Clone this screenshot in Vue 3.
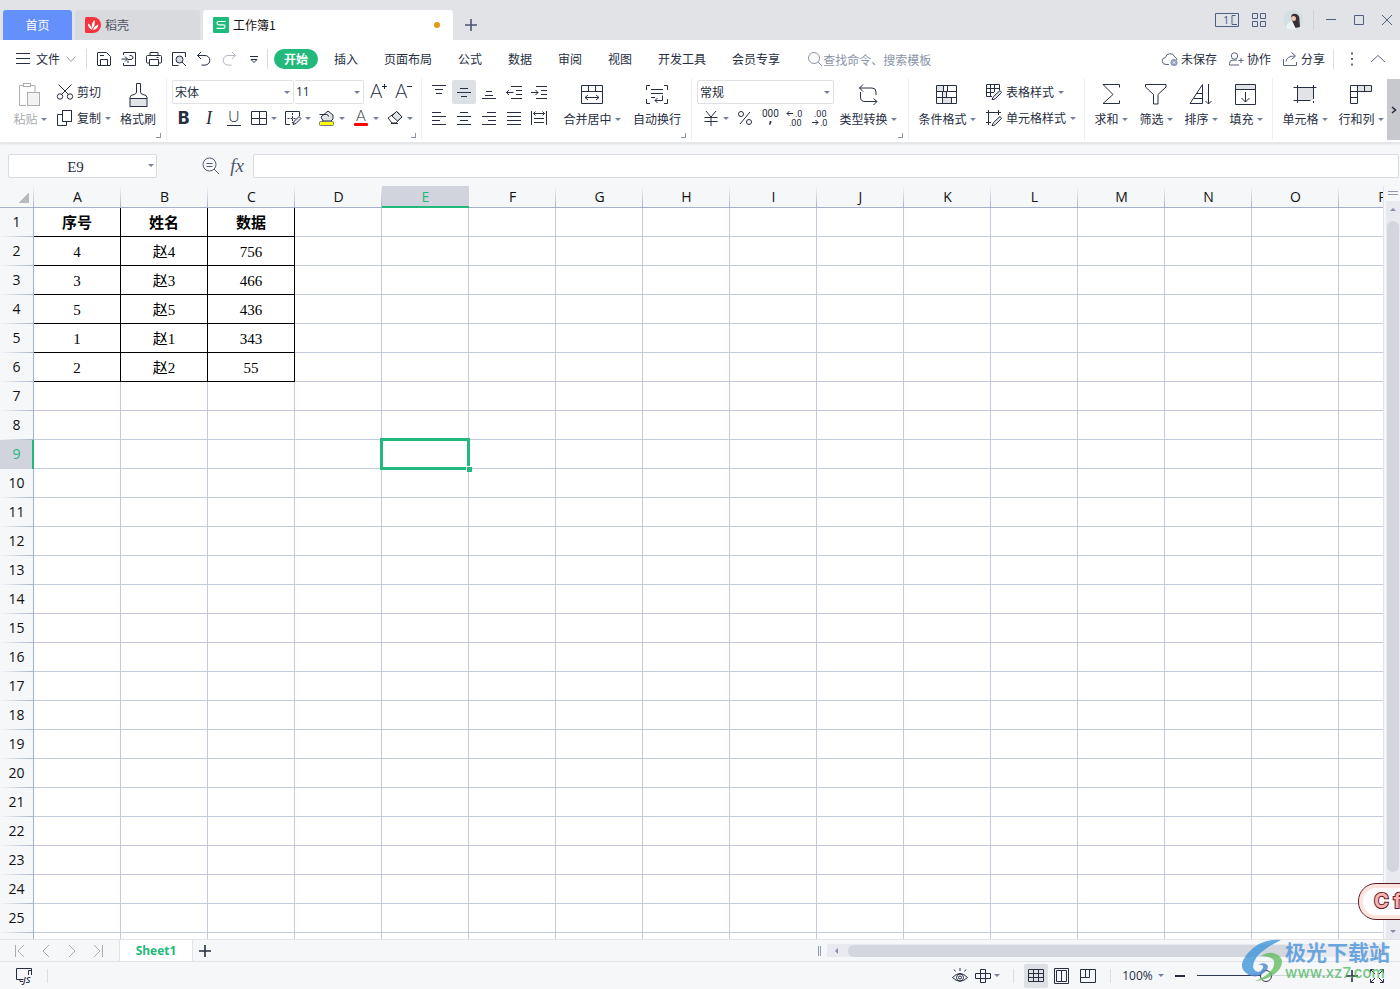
<script setup>
import { h, ref } from 'vue'

const text = (x, y, size, value, extra = '') =>
  `<text x="${x}" y="${y}" font-size="${size}" fill="currentColor" stroke="none" ${extra}>${value}</text>`

const icons = {
  menu: [16, 16, '<path d="M1 2.500h14M1 7.500h14M1 12.500h14"/>'],
  chevronDown: [12, 16, '<path d="M1.500 5.500l4.500 5 4.500-5" stroke="#9a9fab"/>'],
  chevronUp: [16, 16, '<path d="M1 11l7-6.500 7 6.500"/>'],
  save: [16, 16, '<path d="M3 1.500h7.500l4 4V14q0 .5-.5.5H2q-.5 0-.5-.5V2q0-.5.500-.5zM4.500 14V8.500h7V14M4 4.500h4"/>'],
  export: [16, 16, '<path d="M2.500 4V1.500h12v13h-12V12M.500 8h6M4 5.500L6.500 8 4 10.500M7 12V9.500M8.500 4.500h1.500q2.500.500 2 2.500-.5 1.800-3 1.500H7"/>'],
  print: [16, 16, '<path d="M4 4V1.500h8V4M3.500 12H1.500q-1 0-1-1V5.500q0-1 1-1h13q1 0 1 1V11q0 1-1 1h-2M3.500 8.500h9v6h-9zM10.500 6.500h2"/>'],
  preview: [16, 16, '<path d="M14.500 6V1.500h-13v13h6"/><circle cx="8.500" cy="8.500" r="3.500" fill="#d8dade"/><path d="M11 11l4 4"/>'],
  undo: [16, 16, '<path d="M5 1L1.500 4.500 5 8M1.500 4.500H9a4.800 4.800 0 010 9.600H5.500"/>'],
  redo: [16, 16, '<g stroke="#b4b7bf"><path d="M11 1l3.500 3.500L11 8M14.500 4.500H7a4.800 4.800 0 000 9.600h3.500"/></g>'],
  more: [10, 16, '<path d="M1 5.500h8M2 8.500l3 3 3-3z"/>'],
  search: [16, 16, '<circle cx="7" cy="7" r="5.500" stroke="#8a95aa"/><path d="M11 11l4 4" stroke="#8a95aa"/>'],
  cloud: [16, 16, '<path d="M7 13.500H4a3.500 3.500 0 01-.5-7 4.800 4.800 0 019.200-.7A3.900 3.900 0 0115 9"/><circle cx="12" cy="11.500" r="3.500" fill="#8d9bb8" stroke="none"/><path d="M10.800 10.300l2.400 2.400M13.200 10.300l-2.400 2.400" stroke="#fff"/>'],
  people: [16, 16, '<circle cx="6.500" cy="5" r="3.200"/><path d="M9 9.200H5A3.300 3.300 0 001.500 12.500v1.500h9.500M10.500 9.500h5M13 7v5"/>'],
  share: [16, 16, '<path d="M1.500 8v6.500h13V11M4 10.500q.5-5.500 9-5.500M9.500 1.500L13.500 5l-4 3.500"/>'],
  dots: [4, 16, '<path d="M1 2.500h2M1 8h2M1 13.500h2" stroke-width="2"/>'],
  paste: [24, 24, '<g stroke="#aeaeb2"><path d="M8 22.500H1.500V2.500h4M12 2.500h5V9"/><rect x="5.500" y=".5" width="7" height="3"/><rect x="9.500" y="9.500" width="12" height="13" fill="#f3f3f4"/></g>'],
  cut: [18, 18, '<circle cx="4" cy="13.500" r="2.700"/><circle cx="14" cy="13.500" r="2.700"/><path d="M2.500 1.500l10 10M15.500 1.500l-10 10"/>'],
  copy: [18, 18, '<rect x="6.500" y="1.500" width="9" height="11"/><path d="M6 5.500H1.500v11H10.500V13"/>'],
  brush: [24, 24, '<path d="M10.500 9V.500h4V9q0 2 2.500 2.500 4 .5 4 3v1h-17v-1q0-2.500 4-3Q10.500 11 10.500 9z"/><rect x="4" y="15.500" width="17" height="8" fill="#e2e3e7"/>'],
  bigger: [18, 18, text(0, 15, 19, 'A', 'font-family="Lato" font-weight="300"') + '<path d="M12 3.500h5M14.500 1v5"/>'],
  smaller: [18, 18, text(0, 15, 19, 'A', 'font-family="Lato" font-weight="300"') + '<path d="M12 3.500h5"/>'],
  bold: [18, 18, text(3, 15, 17, 'B', 'font-family="Inter" font-weight="800"')],
  italic: [18, 18, text(6, 15, 18, 'I', 'font-family="Liberation Serif" font-style="italic"')],
  underline: [18, 18, text(3, 13, 16, 'U', 'font-family="Lato" font-weight="300"') + '<path d="M2 16.500h14"/>'],
  borders: [18, 18, '<path d="M1.500 2.500h15v13h-15zM9.500 2.500v13M1.500 9.500h15"/>'],
  pattern: [18, 18, '<path d="M6 15.500H1.500V2.500h14V7"/><path d="M8.500 4v10M3.500 9.500h8" stroke-dasharray="2 1"/><path d="M9 15.500l1-3 5-5 2 2-5 5z" fill="#e2e3e7"/>'],
  fill: [18, 18, '<path d="M3 8l7-6 5 4v4l-2 2H5zM1.500 5.500h7q2 0 2 2" fill="#e2e3e7"/><rect x="1.500" y="12.500" width="14" height="4" rx="1" fill="#ff0" stroke="#77777b"/>'],
  fontColor: [18, 18, text(4, 12, 15, 'A', 'font-family="Lato" font-weight="300"') + '<rect x="2" y="14" width="14" height="3" rx="1" fill="red" stroke="none"/>'],
  eraser: [18, 18, '<path d="M2 9l4 5h4l6-6-5-5.500z"/><path d="M6 7l4.500-4.500L16 8l-4.500 4z" fill="#e2e3e7"/><path d="M5 14.500h7"/>'],
  top: [18, 18, '<path d="M2 2.500h14M5 6.500h8M6 10.500h6"/>'],
  middle: [18, 18, '<path d="M5 5.500h8M2 9.500h14M6 13.500h6"/>'],
  bottom: [18, 18, '<path d="M6 8.500h6M5 12.500h8M2 15.500h14"/>'],
  outdent: [18, 18, '<path d="M6 3.500h11M11 7.500h6M11 11.500h6M6 15.500h11M1.500 9.500h7M4 7L1.500 9.500 4 12"/>'],
  indent: [18, 18, '<path d="M6 3.500h11M11 7.500h6M11 11.500h6M6 15.500h11M1 9.500h7M5.500 7L8 9.500 5.500 12"/>'],
  left: [18, 18, '<path d="M2 3.500h9M2 7.500h14M2 11.500h8M2 15.500h14"/>'],
  center: [18, 18, '<path d="M5 3.500h8M2 7.500h14M5 11.500h8M2 15.500h14"/>'],
  right: [18, 18, '<path d="M7 3.500h9M2 7.500h14M8 11.500h8M2 15.500h14"/>'],
  justify: [18, 18, '<path d="M2 3.500h14M2 7.500h14M2 11.500h14M2 15.500h14"/>'],
  distribute: [18, 18, '<path d="M1.500 2v14M16.500 2v14M4 9.500h10M4 13.500h10M3.500 4.500h11M5.500 2.500l-2 2 2 2M12.500 2.500l2 2-2 2"/>'],
  merge: [24, 24, '<path d="M1.500 2.500h21v18h-21zM1.500 8.500h21M8.500 2.500v6M15.500 2.500v6M5 14.500h14M8 12l-3 2.500L8 17M16 12l3 2.500-3 2.500"/>'],
  wrap: [24, 24, '<path d="M5 2.500H1.500V7M19 2.500h3.500V7M5 20.500H1.500V16M19 20.500h3.500V16M6 6.500h12M6 10.500h12M6 14.500h4M17.500 12.500v5H10M12.500 15L10 17.500l2.500 2.500"/>'],
  currency: [18, 18, '<path d="M4 2l5 6 5-6M9 8v9M2.500 8.500h13M2.500 12.500h13"/>'],
  percent: [18, 18, '<circle cx="5" cy="5" r="2.500"/><circle cx="13" cy="13" r="2.500"/><path d="M14 3L4 15"/>'],
  comma: [20, 18, text(2, 8, 10, '000', 'font-family="Roboto"') + '<path d="M10.500 12v1.500l-1 2" stroke-width="1.600"/>'],
  lessDecimal: [20, 18, text(10, 8, 9, '.0', 'font-family="Roboto"') + text(4, 17, 9, '.00', 'font-family="Roboto"') + '<path d="M2 4.500h6M4.500 2L2 4.500 4.500 7"/>'],
  moreDecimal: [20, 18, text(4, 8, 9, '.00', 'font-family="Roboto"') + text(10, 17, 9, '.0', 'font-family="Roboto"') + '<path d="M2 13.500h6M5.500 11L8 13.500 5.500 16"/>'],
  convert: [24, 24, '<path d="M7 1.500L3.500 5 7 8.500M3.500 5H16q4 0 4 4v3M4.500 9v5q0 4.500 4.500 4.500h12M17.500 15.500l3.500 3-3.500 3.500"/>'],
  condition: [24, 24, '<path d="M2 3h7v5H2zM7 9h4v6H7zM8 15h8v5h-8z" fill="#e2e3e7" stroke="none"/><path d="M1.500 2.500h20v18h-20zM1.500 8.500h20M1.500 14.500h20M8.500 2.500v6M14.500 2.500v0M7.500 8.500v12M11.500 8.500v6M16.500 14.500v6M12.500 2.500v6"/>'],
  tableStyle: [18, 18, '<path d="M7 13.500H1.500V1.500h13V7M1.500 5.500h13M1.500 9.500H9M5.500 1.500v12M9.500 1.500V9"/><path d="M7 16.500l1.500-3 6.500-6 1.500 2-6 6q-1.500 1.500-3.500 1z" fill="#e2e3e7"/>'],
  cellStyle: [18, 18, '<path d="M3.500 1v15M1 3.500h15M1 13.500h5M13.500 1v5"/><path d="M7 16.500l1.500-3 6.500-6 1.500 2-6 6q-1.500 1.500-3.500 1z" fill="#e2e3e7"/>'],
  sum: [24, 24, '<path d="M20.500 4.500v-3H4l10 10L4 20.500h16.500v-3"/>'],
  filter: [24, 24, '<path d="M1.500 1.500h20.500v2.500l-8 7.500v9.500h-4.500v-9.500L1.500 4z"/>'],
  sort: [24, 24, '<path d="M1 20.500L13.500 1.500v19zM8 10.500h5.500M5 15.500h8.500M19.500 1v20M16.500 18l3 3 3-3"/>'],
  fillDown: [24, 24, '<path d="M2 2h20v4H2z" fill="#e2e3e7" stroke="none"/><path d="M1.500 1.500h20v20h-20zM1.500 6.500h20M11.500 9v10M7.500 15l4 4 4-4"/>'],
  cell: [24, 24, '<path d="M4 5h16v12H4z" fill="#e2e3e7" stroke="none"/><path d="M4.500 2v18M20.500 2v14M.500 4.500h23M.500 17.500h17M20.500 18v2"/>'],
  rowcol: [24, 24, '<path d="M9 3h6v5H9zM16 3h6v5h-6z" fill="#e2e3e7" stroke="none"/><path d="M1.500 2.500h21v6H8.500v12h-7zM8.500 2.500v6h-7M15.500 2.500v6M1.500 14.500h7"/>'],
  chevronRight: [8, 12, '<path d="M2 3l3.500 3L2 9" stroke-width="1.600"/>'],
  zoomOut: [18, 18, '<circle cx="7.500" cy="7.500" r="6.500"/><path d="M12 12l5 5M4.500 6.500h6M4.500 9.500h6"/>'],
  pages: [24, 16, '<path d="M.500 1.500h23v13H.500zM20.500 3.500h-3.500v9h3.500M20 12.500h2"/>' + text(8, 12, 11, '1', 'font-family="Open Sans"')],
  apps: [16, 16, '<path d="M1.500 1.500h5v5h-5zM9.500 1.500h5v5h-5zM1.500 9.500h5v5h-5zM9.500 9.500h5v5h-5z"/>'],
  minimize: [12, 12, '<path d="M1 5.500h10"/>'],
  maximize: [12, 12, '<path d="M1.500 1.500h9v9h-9z"/>'],
  close: [12, 12, '<path d="M1 1l10 10M11 1L1 11"/>'],
  plus: [14, 14, '<path d="M7 1v12M1 7h12" stroke-width="1.600"/>'],
  minus: [12, 12, '<path d="M1 6h10" stroke-width="2"/>'],
  first: [12, 14, '<path d="M1.500 1v12M10 1L4 7l6 6"/>'],
  prev: [12, 14, '<path d="M9 1L3 7l6 6"/>'],
  next: [12, 14, '<path d="M3 1l6 6-6 6"/>'],
  last: [12, 14, '<path d="M10.500 1v12M2 1l6 6-6 6"/>'],
  macro: [18, 18, '<path d="M8.500 12.500H1.500V1.500h15v5M13.500 8V3.500h3V8"/><path d="M5 12.500v2h3"/>' + text(8, 16, 9, 'JS', 'font-family="Open Sans" font-style="italic" font-weight="600"')],
  eye: [18, 18, '<path d="M1.500 10.500Q9 2.500 16.500 10.500 9 18 1.500 10.500z"/><circle cx="9" cy="10.500" r="3.500"/><circle cx="9" cy="10.500" r="1.500"/><path d="M9 1v3M3 2.500l1.500 2M15 2.500l-1.500 2"/>'],
  cross: [18, 18, '<path d="M6.500 2.500h5v13h-5zM1.500 6.500h15v5h-15z"/>'],
  normalView: [18, 18, '<path d="M1.500 2.500h15v12h-15zM1.500 6.500h15M1.500 10.500h15M6.500 2.500v12M11.500 2.500v12"/>'],
  pageView: [18, 18, '<path d="M1.500 1.500h14v15h-14zM3.500 3.500h10v11h-10zM8.500 3.500v11"/>'],
  breakView: [18, 18, '<path d="M1.500 2.500h15v13h-15zM1.500 10.500h9v-8M6.500 2.500v8"/>'],
  fullscreen: [16, 16, '<path d="M1.500 5V1.500H5M11 1.500h3.500V5M14.500 11v3.500H11M5 14.500H1.500V11M2 2l4 4M14 2l-4 4M14 14l-4-4M2 14l4-4"/>'],
  docer: [16, 16, '<path d="M0 1.500Q0 0 1.500 0H8a8 8 0 010 16H1.500Q0 16 0 14.500z" fill="#f5333f" stroke="none"/><path d="M7 13Q3 11 3 6.500 6.500 8 7 13zM7 12Q6 6 9.500 3 11 7.500 7 12zM8 13q.5-4 5.500-5.500Q12.500 12.500 8 13z" fill="#fff" stroke="none"/>'],
  sheets: [16, 16, '<rect width="16" height="16" rx="1" fill="#1fbb7d" stroke="none"/><path d="M12.500 4.500h-7Q4 4.500 4 6t1.500 1.800h5q1.500 0 1.500 1.700t-1.500 1.800h-7" stroke="#fff" stroke-width="1.200"/>'],
  avatar: [20, 20, '<circle cx="10" cy="10" r="10" fill="#d3dfe3" stroke="none"/><path d="M8 8q0-5 5-4 4 1 3.500 7L17 17l-5 1z" fill="#3b3038" stroke="none"/><circle cx="10.500" cy="8.500" r="2.500" fill="#e8c5b5" stroke="none"/><path d="M3 18q1-6 6-7l4 8q-5 2-10-1z" fill="#edf3f5" stroke="none"/>'],
  logo: [44, 44, '<g stroke="none"><path d="M40 1Q20-1 7 14-4 27 5 34q7 5 17-1-9 1-10-5 0-10 14-19Q32 5 40 1z" fill="#3f97dc"/><path d="M20 17q8-6 17-1 8 6 0 16-9 9-23 10 13-5 18-13 4-9-5-11-3-1-7-1z" fill="#67bd62"/><path d="M6 35q10 6 19-3 4-5 0-7-4-2-8 1 6-1 5 3-3 6-16 6z" fill="#4a86cf"/></g>'],
}

const Icon = (props) => {
  const [w, hgt, body] = icons[props.name]
  return h('svg', {
    class: 'icon', width: w, height: hgt, viewBox: `0 0 ${w} ${hgt}`,
    fill: 'none', stroke: 'currentColor', 'stroke-width': 1, 'aria-hidden': 'true', innerHTML: body,
  })
}
Icon.props = ['name']

const quick = [
  ['save', '保存'], ['export', '输出'], ['print', '打印'], ['preview', '打印预览'],
  ['undo', '撤销'], ['redo', '恢复'], ['more', '更多'],
]
const menus = ['开始', '插入', '页面布局', '公式', '数据', '审阅', '视图', '开发工具', '会员专享']
const formatting = [['bold', '加粗'], ['italic', '倾斜'], ['underline', '下划线']]
const painting = [['borders', '边框'], ['pattern', '绘图边框'], ['fill', '填充颜色'], ['fontColor', '字体颜色'], ['eraser', '清除']]
const alignTop = [['top', '顶端对齐'], ['middle', '垂直居中'], ['bottom', '底端对齐'], ['outdent', '减少缩进'], ['indent', '增加缩进']]
const alignBottom = [['left', '左对齐'], ['center', '水平居中'], ['right', '右对齐'], ['justify', '两端对齐'], ['distribute', '分散对齐']]
const numbers = [['percent', '百分比'], ['comma', '千位分隔'], ['lessDecimal', '增加小数位'], ['moreDecimal', '减少小数位']]
const editing = [['sum', '求和'], ['filter', '筛选'], ['sort', '排序'], ['fillDown', '填充']]
const sheetNav = [['first', '第一个'], ['prev', '上一个'], ['next', '下一个'], ['last', '最后一个']]

const columns = 'ABCDEFGHIJKLMNOP'.split('')
const data = [
  ['序号', '姓名', '数据'],
  ['4', '赵4', '756'],
  ['3', '赵3', '466'],
  ['5', '赵5', '436'],
  ['1', '赵1', '343'],
  ['2', '赵2', '55'],
]
const value = (r, c) => data[r - 1]?.[c] ?? ''
const filled = (r, c) => r <= data.length && c < 3
const zoom = ref(50)
</script>

<template>
  <div class="app">
    <header class="titlebar">
      <button class="tab home">首页</button>
      <button class="tab docer"><Icon name="docer" />稻壳</button>
      <button class="tab book"><Icon name="sheets" />工作簿1<span class="unsaved"></span></button>
      <button class="add-tab" aria-label="新建"><Icon name="plus" /></button>
      <div class="window-tools">
        <button aria-label="窗口"><Icon name="pages" /></button>
        <button aria-label="应用"><Icon name="apps" /></button>
        <button class="user" aria-label="账号"><Icon name="avatar" /></button>
        <span class="rule"></span>
        <button aria-label="最小化"><Icon name="minimize" /></button>
        <button aria-label="最大化"><Icon name="maximize" /></button>
        <button aria-label="关闭"><Icon name="close" /></button>
      </div>
    </header>

    <nav class="menubar">
      <button class="file"><Icon name="menu" />文件<Icon name="chevronDown" /></button>
      <span class="rule"></span>
      <div class="quick">
        <button v-for="[icon, label] in quick" :key="icon" :aria-label="label"><Icon :name="icon" /></button>
      </div>
      <span class="rule"></span>
      <div class="menus">
        <button v-for="(m, i) in menus" :key="m" :class="{ active: i === 0 }">{{ m }}</button>
      </div>
      <label class="search"><Icon name="search" /><input type="text" placeholder="查找命令、搜索模板" aria-label="查找命令" /></label>
      <div class="account">
        <button><Icon name="cloud" />未保存</button>
        <button><Icon name="people" />协作</button>
        <button><Icon name="share" />分享</button>
        <span class="rule"></span>
        <button class="kebab" aria-label="更多"><Icon name="dots" /></button>
        <button aria-label="收起"><Icon name="chevronUp" /></button>
      </div>
    </nav>

    <section class="ribbon">
      <div class="group clipboard">
        <button class="big paste"><Icon name="paste" /><span>粘贴<i class="caret"></i></span></button>
        <div class="stack">
          <button><Icon name="cut" />剪切</button>
          <button><Icon name="copy" />复制<i class="caret"></i></button>
        </div>
        <button class="big painter"><Icon name="brush" /><span>格式刷</span></button>
        <i class="launcher"></i>
      </div>
      <div class="group font">
        <div class="stack">
          <div class="line">
            <label class="pick family"><select aria-label="字体"><option>宋体</option></select><i class="caret"></i></label>
            <label class="pick size"><select aria-label="字号"><option>11</option></select><i class="caret"></i></label>
            <button class="tool grow" aria-label="增大字号"><Icon name="bigger" /></button>
            <button class="tool" aria-label="减小字号"><Icon name="smaller" /></button>
          </div>
          <div class="line">
            <button v-for="[icon, label] in formatting" :key="icon" class="tool" :aria-label="label"><Icon :name="icon" /></button>
            <button v-for="[icon, label] in painting" :key="icon" class="split" :aria-label="label"><Icon :name="icon" /><i class="caret"></i></button>
          </div>
        </div>
        <i class="launcher"></i>
      </div>
      <div class="group align">
        <div class="stack">
          <div class="line">
            <button v-for="[icon, label] in alignTop" :key="icon" class="tool" :class="{ on: icon === 'middle' }" :aria-label="label"><Icon :name="icon" /></button>
          </div>
          <div class="line">
            <button v-for="[icon, label] in alignBottom" :key="icon" class="tool" :aria-label="label"><Icon :name="icon" /></button>
          </div>
        </div>
        <button class="big merge"><Icon name="merge" /><span>合并居中<i class="caret"></i></span></button>
        <button class="big"><Icon name="wrap" /><span>自动换行</span></button>
        <i class="launcher"></i>
      </div>
      <div class="group number">
        <div class="stack">
          <div class="line">
            <label class="pick format"><select aria-label="数字格式"><option>常规</option></select><i class="caret"></i></label>
          </div>
          <div class="line">
            <button class="split" aria-label="货币"><Icon name="currency" /><i class="caret"></i></button>
            <button v-for="[icon, label] in numbers" :key="icon" class="tool" :aria-label="label"><Icon :name="icon" /></button>
          </div>
        </div>
        <button class="big"><Icon name="convert" /><span>类型转换<i class="caret"></i></span></button>
        <i class="launcher"></i>
      </div>
      <div class="group style">
        <button class="big"><Icon name="condition" /><span>条件格式<i class="caret"></i></span></button>
        <div class="stack">
          <button><Icon name="tableStyle" />表格样式<i class="caret"></i></button>
          <button><Icon name="cellStyle" />单元格样式<i class="caret"></i></button>
        </div>
      </div>
      <div class="group editing">
        <button v-for="[icon, label] in editing" :key="icon" class="big"><Icon :name="icon" /><span>{{ label }}<i class="caret"></i></span></button>
      </div>
      <div class="group cells">
        <button class="big"><Icon name="cell" /><span>单元格<i class="caret"></i></span></button>
        <button class="big"><Icon name="rowcol" /><span>行和列<i class="caret"></i></span></button>
      </div>
      <button class="scroll-more" aria-label="更多工具"><Icon name="chevronRight" /></button>
    </section>

    <section class="formula">
      <label class="name-box"><input type="text" value="E9" aria-label="名称框" /><i class="caret"></i></label>
      <button class="lens" aria-label="缩小"><Icon name="zoomOut" /></button>
      <button class="fx" aria-label="插入函数">fx</button>
      <input class="formula-input" type="text" aria-label="编辑栏" />
    </section>

    <main class="sheet">
      <div class="viewport">
        <table>
          <colgroup><col class="row-col" /><col v-for="c in columns" :key="c" class="data-col" /></colgroup>
          <thead>
            <tr>
              <th class="corner"></th>
              <th v-for="c in columns" :key="c" :class="{ current: c === 'E' }">{{ c }}</th>
            </tr>
          </thead>
          <tbody>
            <tr v-for="r in 26" :key="r">
              <th :class="{ current: r === 9 }">{{ r }}</th>
              <td v-for="(c, i) in columns" :key="c" :class="{ filled: filled(r, i), head: r === 1 }">
                {{ value(r, i) }}<div v-if="r === 9 && c === 'E'" class="selection"></div>
              </td>
            </tr>
          </tbody>
        </table>
      </div>
      <div class="vscroll">
        <div class="splitter"></div>
        <div class="track">
          <i class="arrow up"></i>
          <div class="thumb"></div>
          <i class="arrow down"></i>
        </div>
      </div>
      <div class="sticker">C f</div>
    </main>

    <section class="sheetbar">
      <div class="sheet-nav">
        <button v-for="[icon, label] in sheetNav" :key="icon" :aria-label="label"><Icon :name="icon" /></button>
      </div>
      <button class="sheet-tab">Sheet1</button>
      <button class="add-sheet" aria-label="新建工作表"><Icon name="plus" /></button>
      <div class="hsplit"></div>
      <div class="hscroll"><i class="arrow back"></i><div class="thumb"></div><i class="arrow forward"></i></div>
    </section>

    <footer class="status">
      <button class="macro" aria-label="宏"><Icon name="macro" /></button>
      <span class="rule"></span>
      <div class="status-right">
        <button aria-label="护眼模式"><Icon name="eye" /></button>
        <button class="reading" aria-label="阅读模式"><Icon name="cross" /><i class="caret"></i></button>
        <span class="rule"></span>
        <button class="view on" aria-label="普通视图"><Icon name="normalView" /></button>
        <button class="view" aria-label="页面布局视图"><Icon name="pageView" /></button>
        <button class="view" aria-label="分页预览"><Icon name="breakView" /></button>
        <span class="rule"></span>
        <button class="percent">100%<i class="caret"></i></button>
        <button aria-label="缩小显示"><Icon name="minus" /></button>
        <input v-model="zoom" type="range" min="0" max="100" aria-label="缩放比例" />
        <button aria-label="放大显示"><Icon name="plus" /></button>
        <button class="full" aria-label="全屏"><Icon name="fullscreen" /></button>
      </div>
      <div class="mark">
        <Icon name="logo" />
        <div><strong>极光下载站</strong><span>www.xz7.com</span></div>
      </div>
    </footer>
  </div>
</template>

<style>
body { margin: 0; }
</style>

<style scoped>
.app {
  --ink: #262e42;
  --green: #22b97c;
  --line: #e1e3e8;
  --latin: "Open Sans", "Noto Sans CJK SC", sans-serif;
  display: flex;
  flex-direction: column;
  height: 100vh;
  overflow: hidden;
  position: relative;
  background: #f6f7f9;
  color: var(--ink);
  font: 12px/18px "Noto Sans CJK SC", sans-serif;
}
button, input, select { font: inherit; color: inherit; border: 0; padding: 0; margin: 0; background: none; box-sizing: border-box; outline: 0; }
button { display: flex; align-items: center; justify-content: center; white-space: nowrap; flex: none; }
.icon { display: block; flex: none; overflow: visible; }
.rule { width: 1px; height: 20px; background: #dcdee3; flex: none; }
.caret { width: 0; height: 0; flex: none; border: 3px solid transparent; border-top-color: #76819a; border-bottom: 0; }

.titlebar { display: flex; align-items: flex-end; height: 40px; background: #e2e3e7; padding-left: 3px; flex: none; }
.tab { height: 30px; border-radius: 3px 3px 0 0; margin-right: 3px; gap: 4px; }
.home { width: 69px; background: #6490fb; color: #fff; }
.docer { width: 125px; background: #d9dade; color: #4d5260; justify-content: flex-start; padding-left: 10px; }
.book { width: 250px; background: #fff; justify-content: flex-start; padding: 0 13px 0 10px; color: #111; }
.unsaved { width: 6px; height: 6px; border-radius: 50%; background: #e49a14; margin-left: auto; }
.add-tab { width: 30px; height: 30px; color: #4a5673; }
.window-tools { display: flex; align-items: center; align-self: stretch; margin-left: auto; gap: 16px; padding-right: 7px; color: #4f5f80; }
.window-tools button { width: 12px; }
.window-tools button:first-child { width: 24px; margin-right: -4px; }
.window-tools button:nth-child(2) { width: 16px; }
.window-tools .user { width: 20px; margin-right: -6px; }
.window-tools .rule { margin-right: -5px; background: #cdd0d6; }

.menubar { display: flex; align-items: center; height: 38px; background: #fff; padding-left: 15px; flex: none; }
.file { gap: 5px; width: 62px; margin-right: 9px; }
.quick { display: flex; padding: 0 1px 0 4px; width: 175px; }
.quick button { width: 25px; height: 24px; }
.menus { display: flex; gap: 26px; margin-left: 16px; }
.menus .active { background: var(--green); color: #fff; font-weight: 700; border-radius: 10px; width: 44px; height: 20px; margin: 0 -10px; }
.search { display: flex; align-items: center; margin-left: 27px; }
.search input { width: 120px; height: 20px; }
.search input::placeholder { color: #8a93a8; opacity: 1; }
.account { display: flex; align-items: center; margin-left: auto; gap: 11px; padding-right: 14px; }
.account button { gap: 3px; }
.account .icon { color: #5d687f; }
.account .rule { margin-left: -3px; }
.account .kebab { width: 14px; }

.ribbon { display: flex; height: 64px; background: #fff; border-bottom: 1px solid #e6e7ea; box-shadow: 0 1px 2px #0000001a; flex: none; z-index: 1; }
.group { display: flex; position: relative; height: 62px; box-sizing: border-box; border-right: 1px solid #eceef1; padding-top: 1px; flex: none; }
.launcher { position: absolute; right: 5px; bottom: 2px; width: 4px; height: 4px; border: solid #8b94a8; border-width: 0 1px 1px 0; }
.big { flex-direction: column; justify-content: flex-start; gap: 3px; padding-top: 4px; width: 60px; }
.big .icon { height: 24px; }
.big span { display: flex; align-items: center; gap: 3px; height: 18px; }
.stack { display: flex; flex-direction: column; }
.stack > button { height: 26px; gap: 3px; justify-content: flex-start; }
.line { display: flex; align-items: center; height: 26px; }
.tool { width: 24px; height: 24px; margin-right: 1px; border-radius: 2px; }
.on { background: #dde1e6; }
.split { width: 34px; height: 24px; gap: 3px; }
.clipboard { width: 167px; }
.paste { width: 40px; margin-left: 10px; color: #a9abb1; }
.clipboard .stack { margin-left: 6px; width: 60px; }
.painter { width: 44px; }
.font { width: 255px; padding-left: 5px; }
.grow { margin-left: 3px; }
.font .tool + .split { margin-left: -1px; }
.pick { position: relative; display: block; height: 24px; box-sizing: border-box; border: 1px solid #dfe1e5; border-radius: 2px; }
.pick select { appearance: none; width: 100%; height: 22px; padding-left: 2px; display: block; }
.pick .caret, .name-box .caret { position: absolute; right: 3px; top: 10px; pointer-events: none; }
.family { width: 122px; }
.size { width: 70px; border-left: 0; font-family: var(--latin); }
.format { width: 137px; }
.align { width: 270px; padding-left: 5px; }
.merge { margin: 0 6px 0 10px; }
.align .big:last-of-type { width: 58px; }
.number { width: 217px; padding-left: 5px; }
.number .stack { margin-right: 4px; width: 137px; }
.number .split { width: 36px; }
.style { width: 176px; padding-left: 8px; }
.style .stack { margin-left: 8px; }
.style .stack button .caret, .clipboard .stack .caret { margin-left: 1px; }
.editing { width: 188px; padding-left: 8px; gap: 9px; }
.editing .big { width: 36px; }
.cells { padding-left: 8px; gap: 8px; border-right: 0; }
.cells .big { width: 48px; }
.scroll-more { width: 13px; height: 61px; background: #c7c9cf; margin: 1px 0 0 auto; }

.formula { display: flex; align-items: center; height: 43px; padding: 3px 0 0 8px; flex: none; box-sizing: border-box; }
.name-box { position: relative; width: 149px; }
.name-box input { width: 100%; height: 24px; border: 1px solid #d9dbe0; border-radius: 2px; background: #fff; text-align: center; padding: 2px 14px 0 0; font: 15px/20px "Liberation Serif", serif; display: block; }
.lens { width: 20px; margin-left: 44px; color: #555e72; }
.fx { width: 20px; margin: 0 6px; font: italic 19px/22px "Liberation Serif", serif; color: #4e566a; }
.formula-input { flex: 1; min-width: 0; height: 24px; border: 1px solid #d9dbe0; border-radius: 2px; background: #fff; margin-right: 1px; padding: 0 6px; }

.sheet { display: flex; flex: 1; min-height: 0; position: relative; overflow: hidden; }
.viewport { flex: 1; min-width: 0; overflow: hidden; background: #fff; border-right: 1px solid var(--line); }
table { table-layout: fixed; border-collapse: separate; border-spacing: 0; width: 1426px; }
.row-col { width: 34px; }
.data-col { width: 87px; }
th, td { box-sizing: border-box; padding: 0; height: 29px; text-align: center; overflow: visible; }
thead th { height: 22px; font: 400 14px/20px var(--latin); color: #111; background: linear-gradient(transparent, #aab4cc) right / 1px 100% no-repeat #f6f7f9; border-bottom: 1px solid #a5b0ca; }
tbody th { font: 400 14px/20px var(--latin); color: #111; background: linear-gradient(90deg, transparent, #aab4cc) bottom / 100% 1px no-repeat #f6f7f9; border-right: 1px solid #a5b0ca; padding-bottom: 2px; }
thead .current { background: #d1d4dc; color: var(--green); border-bottom-color: var(--green); box-shadow: inset 0 -1px var(--green); }
tbody .current { background: #d1d4dc; color: var(--green); border-right-color: var(--green); box-shadow: inset -1px 0 var(--green); }
.corner { background: linear-gradient(135deg, transparent 50%, #b8babd 50%) 18px 6px / 11px 11px no-repeat, linear-gradient(transparent, #aab4cc) right / 1px 100% no-repeat, #f6f7f9 !important; }
td { position: relative; border-right: 1px solid #c3cadc; border-bottom: 1px solid #c3cadc; font: 15px/20px "Liberation Serif", "Noto Sans CJK SC", serif; color: #000; padding-top: 2px; }
td.filled { border-color: #000; }
td.head { font-weight: 700; }
.selection { position: absolute; inset: -2px; border: 3px solid var(--green); z-index: 1; }
.selection::after { content: ""; position: absolute; right: -5px; bottom: -5px; width: 5px; height: 5px; background: var(--green); border: solid #fff; border-width: 1px 0 0 1px; }
.vscroll { width: 16px; display: flex; flex-direction: column; padding-left: 2px; box-sizing: border-box; flex: none; }
.splitter { height: 2px; margin: 5px 2px 6px; border: solid #8d99b3; border-width: 1px 0; flex: none; }
.track { flex: 1; display: flex; flex-direction: column; align-items: center; background: #e9eaf0; padding: 7px 0 6px; }
.arrow { border: 3px solid transparent; width: 0; height: 0; flex: none; }
.up { border-top: 0; border-bottom-color: #8390ac; }
.down { border-bottom: 0; border-top-color: #8390ac; }
.track .thumb { flex: 1; width: 12px; margin: 10px 0 58px; border-radius: 6px; background: #d3d6dd; }
.sticker { position: absolute; right: -40px; bottom: 19px; width: 80px; height: 35px; border: 1px solid #5b1d22; border-radius: 18px; background: #fff; box-shadow: inset 0 0 0 4px #fde3dd; text-indent: 15px; font: 700 20px/34px "Inter", sans-serif; color: #fbb4b4; -webkit-text-stroke: 2px #5b1d22; paint-order: stroke fill; white-space: pre; }

.sheetbar { display: flex; align-items: center; height: 23px; box-sizing: border-box; border: solid var(--line); border-width: 1px 0; flex: none; }
.sheet-nav { display: flex; gap: 14px; padding: 0 15px 0 14px; color: #a9adb6; }
.sheet-tab { align-self: stretch; width: 74px; background: #fff; border: solid var(--line); border-width: 0 1px; color: var(--green); font: 700 12px/18px var(--latin); }
.add-sheet { width: 24px; }
.hsplit { width: 1px; height: 10px; border: solid #8d99b3; border-width: 0 1px; margin-left: auto; }
.hscroll { width: 40%; margin: 0 13px 0 6px; height: 13px; display: flex; align-items: center; background: #e9eaf0; padding: 0 5px; box-sizing: border-box; }
.hscroll .thumb { flex: 1; height: 12px; margin: 0 88px 0 10px; border-radius: 6px; background: #d3d6dd; }
.back { border-left: 0; border-right-color: #8390ac; margin-left: 3px; }
.forward { border-right: 0; border-left-color: #8390ac; }

.status { display: flex; align-items: center; height: 27px; flex: none; position: relative; }
.status .rule { height: 14px; }
.macro { margin: 0 14px 0 15px; }
.status-right { display: flex; align-items: center; margin-left: auto; padding-right: 15px; }
.reading { gap: 2px; margin: 0 13px 0 5px; }
.view { width: 24px; height: 24px; margin-left: 2px; border-radius: 2px; }
.view.on { margin-left: 10px; }
.status-right .view + .rule { margin: 0 10px; }
.percent { gap: 5px; width: 44px; margin-right: 9px; font-family: var(--latin); }
input[type="range"] { appearance: none; width: 138px; height: 14px; margin: 0 10px 0 11px; background: linear-gradient(90deg, #2f3950 50%, #cfd3db 50%) center / 100% 1px no-repeat; }
input[type="range"]::-webkit-slider-thumb { appearance: none; width: 12px; height: 12px; border: 1px solid #333b4d; border-radius: 50%; background: #f6f7f9; box-sizing: border-box; }
.full { margin-left: 10px; }
.mark { position: absolute; right: 10px; bottom: 6px; display: flex; align-items: center; opacity: .8; pointer-events: none; }
.mark div { display: flex; flex-direction: column; }
.mark strong { font: 700 21px/24px "Noto Sans CJK SC", sans-serif; color: #4c94d8; }
.mark span { font: 500 15px/20px "Inter", sans-serif; color: #55b868; }
</style>
